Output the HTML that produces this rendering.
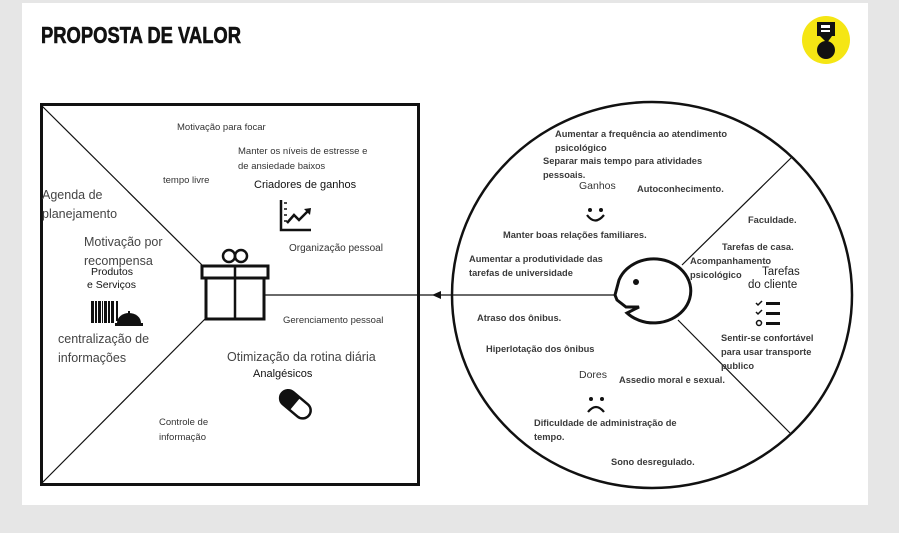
<!DOCTYPE html>
<html><head><meta charset="utf-8"><style>
body{margin:0;width:899px;height:533px;background:#e6e6e6;position:relative;overflow:hidden;font-family:"Liberation Sans","DejaVu Sans",sans-serif;}
.card{position:absolute;left:22px;top:3px;width:846px;height:502px;background:#fff;}
.t{position:absolute;white-space:nowrap;color:#333;font-size:9.5px;line-height:15px;}
.b{font-weight:bold;color:#3a3a3a;font-size:9.3px;line-height:14px;}
.m{font-size:12.5px;line-height:18px;color:#444;}
.h{font-size:11px;color:#111;}
</style></head><body>
<div class="card"></div>
<div class="t" style="left:41px;top:21px;font-size:23px;font-weight:bold;color:#111;transform:scaleX(0.8);transform-origin:left top;line-height:28px;-webkit-text-stroke:0.6px #111">PROPOSTA DE VALOR</div>
<svg style="position:absolute;left:0;top:0" width="899" height="533">
<circle cx="826" cy="40" r="24" fill="#f5e614"/>
<rect x="817" y="22" width="18" height="14" fill="#111"/>
<rect x="821" y="25" width="9" height="3" fill="#fff"/><rect x="821" y="30" width="9" height="2" fill="#fff"/>
<path d="M820 36 L832 36 L827 43 Z" fill="#111"/>
<circle cx="826" cy="50" r="9" fill="#111"/>
<rect x="41.5" y="104.5" width="377" height="380" fill="none" stroke="#111" stroke-width="3"/>
<line x1="42" y1="106" x2="203" y2="266" stroke="#111" stroke-width="1.2"/>
<line x1="42" y1="483" x2="206" y2="318" stroke="#111" stroke-width="1.2"/>
<line x1="265" y1="295" x2="615" y2="295" stroke="#111" stroke-width="1.3"/>
<path d="M432 295 L441 291 L441 299 Z" fill="#111"/>
<ellipse cx="652" cy="295" rx="200" ry="193" fill="none" stroke="#111" stroke-width="2.5"/>
<line x1="682" y1="265" x2="792" y2="157" stroke="#111" stroke-width="1.2"/>
<line x1="678" y1="320" x2="790" y2="433" stroke="#111" stroke-width="1.2"/>
<path d="M619 280 A37 32 0 1 1 627 313 L639 307 L626 307 L617 300 L615 295 Z" fill="#fff" stroke="#111" stroke-width="3"/>
<circle cx="636" cy="282" r="3" fill="#111"/>
<rect x="202" y="266" width="66" height="12" fill="#fff" stroke="#111" stroke-width="3"/>
<rect x="206" y="278" width="58" height="41" fill="#fff" stroke="#111" stroke-width="3"/>
<line x1="235" y1="266" x2="235" y2="319" stroke="#111" stroke-width="2.5"/>
<circle cx="229" cy="256" r="6" fill="none" stroke="#111" stroke-width="2.5"/>
<circle cx="241" cy="256" r="6" fill="none" stroke="#111" stroke-width="2.5"/>
<path d="M281 200 L281 230 L311 230" fill="none" stroke="#111" stroke-width="2.5"/>
<path d="M284 203h3M284 209h3M284 215h3M284 221h3" stroke="#111" stroke-width="1.5"/>
<path d="M287 223 L294 215 L299 220 L309 210" fill="none" stroke="#111" stroke-width="2.5"/>
<path d="M304 209 L311 208 L310 215 Z" fill="#111"/>
<g fill="#111"><rect x="91" y="301" width="3" height="22"/><rect x="95" y="301" width="2" height="22"/><rect x="98" y="301" width="3" height="22"/><rect x="102" y="301" width="1" height="22"/><rect x="104" y="301" width="3" height="22"/><rect x="108" y="301" width="2" height="22"/><rect x="111" y="301" width="3" height="22"/><rect x="116" y="301" width="2" height="20"/></g>
<path d="M117 323 A12 10 0 0 1 141 323 Z" fill="#111"/><rect x="115" y="323" width="28" height="3" fill="#111"/><rect x="128" y="311" width="2" height="3" fill="#111"/>
<g transform="rotate(40 295 404)"><rect x="278" y="396" width="35" height="16" rx="8" fill="#fff" stroke="#111" stroke-width="2.5"/><path d="M286 396 L295 396 L295 412 L286 412 A8 8 0 0 1 286 396 Z" fill="#111"/></g>
<circle cx="590" cy="210" r="2" fill="#111"/><circle cx="601" cy="210" r="2" fill="#111"/>
<path d="M587 215 Q595 226 604 215" fill="none" stroke="#111" stroke-width="2.2"/>
<circle cx="591" cy="399" r="2" fill="#111"/><circle cx="602" cy="399" r="2" fill="#111"/>
<path d="M588 412 Q596 402 604 412" fill="none" stroke="#111" stroke-width="2.2"/>
<path d="M756 303 l2 2 l4 -4 M756 312 l2 2 l4 -4" fill="none" stroke="#111" stroke-width="1.5"/>
<circle cx="759" cy="323" r="2.5" fill="none" stroke="#111" stroke-width="1.5"/>
<rect x="766" y="302" width="14" height="3" fill="#111"/><rect x="766" y="312" width="14" height="3" fill="#111"/><rect x="766" y="322" width="14" height="3" fill="#111"/>
</svg>
<div class="t" style="left:177px;top:120px">Motivação para focar</div>
<div class="t" style="left:238px;top:144px">Manter os níveis de estresse e</div>
<div class="t" style="left:238px;top:159px">de ansiedade baixos</div>
<div class="t" style="left:163px;top:173px">tempo livre</div>
<div class="t h" style="left:254px;top:178px">Criadores de ganhos</div>
<div class="t" style="left:289px;top:241px;font-size:10px">Organização pessoal</div>
<div class="t m" style="left:42px;top:186px;line-height:19px">Agenda de<br>planejamento</div>
<div class="t m" style="left:84px;top:233px;line-height:19px">Motivação por<br>recompensa</div>
<div class="t h" style="left:91px;top:266px;font-size:10.5px;line-height:13px">Produtos</div>
<div class="t h" style="left:87px;top:279px;font-size:10.5px;line-height:13px">e Serviços</div>
<div class="t m" style="left:58px;top:330px;line-height:19px">centralização de<br>informações</div>
<div class="t" style="left:283px;top:313px">Gerenciamento pessoal</div>
<div class="t m" style="left:227px;top:348px">Otimização da rotina diária</div>
<div class="t h" style="left:253px;top:367px">Analgésicos</div>
<div class="t" style="left:159px;top:415px;line-height:15px">Controle de<br>informação</div>
<div class="t b" style="left:555px;top:127px">Aumentar a frequência ao atendimento</div>
<div class="t b" style="left:555px;top:141px">psicológico</div>
<div class="t b" style="left:543px;top:154px">Separar mais tempo para atividades</div>
<div class="t b" style="left:543px;top:168px">pessoais.</div>
<div class="t h" style="left:579px;top:179px;font-size:10.5px;color:#333">Ganhos</div>
<div class="t b" style="left:637px;top:182px">Autoconhecimento.</div>
<div class="t b" style="left:503px;top:228px">Manter boas relações familiares.</div>
<div class="t b" style="left:469px;top:252px">Aumentar a produtividade das</div>
<div class="t b" style="left:469px;top:266px">tarefas de universidade</div>
<div class="t b" style="left:748px;top:213px">Faculdade.</div>
<div class="t b" style="left:722px;top:240px">Tarefas de casa.</div>
<div class="t b" style="left:690px;top:254px">Acompanhamento</div>
<div class="t b" style="left:690px;top:268px">psicológico</div>
<div class="t h" style="left:762px;top:266px;font-size:11.5px;line-height:13px;color:#222">Tarefas</div>
<div class="t h" style="left:748px;top:279px;font-size:11.5px;line-height:13px;color:#222">do cliente</div>
<div class="t b" style="left:477px;top:311px">Atraso dos ônibus.</div>
<div class="t b" style="left:721px;top:331px">Sentir-se confortável</div>
<div class="t b" style="left:721px;top:345px">para usar transporte</div>
<div class="t b" style="left:721px;top:359px">publico</div>
<div class="t b" style="left:486px;top:342px">Hiperlotação dos ônibus</div>
<div class="t h" style="left:579px;top:368px;font-size:10.5px;color:#333">Dores</div>
<div class="t b" style="left:619px;top:373px">Assedio moral e sexual.</div>
<div class="t b" style="left:534px;top:416px">Dificuldade de administração de</div>
<div class="t b" style="left:534px;top:430px">tempo.</div>
<div class="t b" style="left:611px;top:455px">Sono desregulado.</div>
</body></html>
